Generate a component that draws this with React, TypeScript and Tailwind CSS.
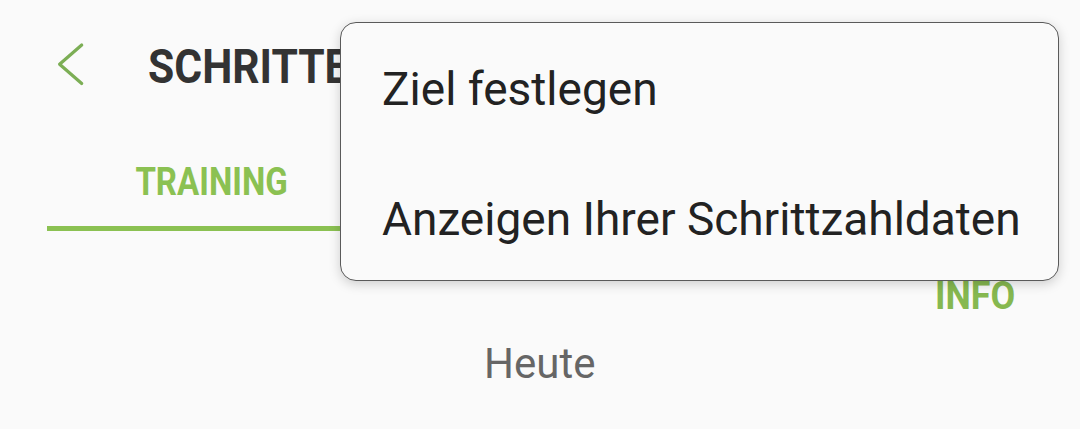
const font = { fontFamily: "Roboto, 'Noto Sans', sans-serif" };

function BackChevron() {
  return (
    <svg viewBox="0 0 30 46" className="w-[30px] h-[46px] shrink-0" fill="none">
      <path
        d="M25.7 3 L3.6 22.3 L25.7 41.5"
        stroke="#7cae55"
        strokeWidth="3.2"
        strokeLinecap="round"
        strokeLinejoin="round"
      />
    </svg>
  );
}

const MENU_ITEMS = ["Ziel festlegen", "Anzeigen Ihrer Schrittzahldaten"];

export default function App() {
  return (
    <div
      className="relative w-[1080px] h-[429px] overflow-hidden bg-[#fafafa]"
      style={font}
    >
      {/* header */}
      <header className="flex items-start pt-[42px] pl-[56px]">
        <BackChevron />
        <h1 className="ml-[62px] text-[49px] leading-none font-bold text-[#333333] whitespace-nowrap">
          <span className="inline-block origin-left scale-x-[0.87]">SCHRITTE</span>
        </h1>
      </header>

      {/* tabs */}
      <nav className="flex px-[47px] mt-[72px]">
        <div className="w-[329px] flex flex-col items-center">
          <span className="text-[38px] leading-none font-bold text-[#8bc152] inline-block scale-x-[0.87]">
            TRAINING
          </span>
          <div className="mt-[25px] h-[5px] w-full bg-[#8bc152]" />
        </div>
      </nav>

      <div className="flex justify-end pr-[65px] mt-[46px]">
        <span className="text-[39px] leading-none font-bold text-[#86b850] inline-block origin-right scale-x-[0.92]">
          INFO
        </span>
      </div>

      <div className="pl-[484px] mt-[27px] text-[42px] leading-none text-[#666666]">
        Heute
      </div>

      {/* overflow menu */}
      <div className="absolute left-[340px] top-[22px] w-[719px] h-[259px] rounded-[16px] border border-[#5a5a5a] bg-[#fafafa] shadow-[0_3px_12px_rgba(0,0,0,0.18)] flex flex-col gap-[84px] pt-[43px] pl-[41px]">
        {MENU_ITEMS.map((item) => (
          <div key={item} className="text-[46px] leading-none text-[#222222] whitespace-nowrap">
            {item}
          </div>
        ))}
      </div>
    </div>
  );
}
